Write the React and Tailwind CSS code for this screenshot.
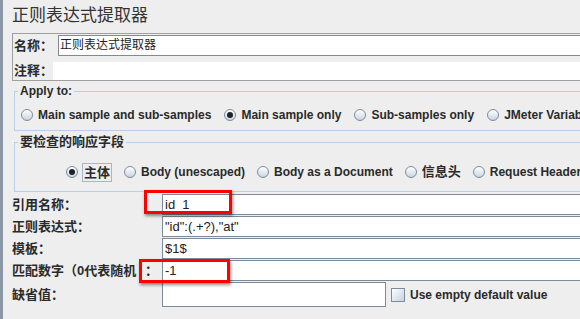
import React from "react";

const Radio = ({ checked }) => (
  <span className="relative inline-block w-[12px] h-[12px] shrink-0 rounded-full border border-[#7d8b99] bg-gradient-to-b from-[#ffffff] to-[#c9d5e2]">
    {checked && (
      <span className="absolute left-[2px] top-[2px] w-[6px] h-[6px] rounded-full bg-[#1e2228]" />
    )}
  </span>
);

const RadioItem = ({ checked, children }) => (
  <div className="flex items-center gap-[5px] shrink-0">
    <Radio checked={checked} />
    <span className="text-[12px] font-bold text-[#2a2a2a] leading-[16px] whitespace-nowrap">
      {children}
    </span>
  </div>
);

const Field = ({ children, className = "" }) => (
  <div
    className={
      "h-[21px] bg-white border border-[#7d8b99] pl-[2px] flex items-center text-[13px] text-[#222] whitespace-nowrap " +
      className
    }
  >
    {children}
  </div>
);

const Row = ({ label, children }) => (
  <div className="flex items-center mb-[1px]">
    <div className="w-[150px] shrink-0 text-[13px] font-bold text-[#2a2a2a] leading-[21px] whitespace-nowrap overflow-hidden">
      {label}
    </div>
    {children}
  </div>
);

export default function App() {
  return (
    <div className="w-[580px] h-[319px] overflow-hidden bg-[#eeeeee] flex font-['Liberation_Sans','Noto_Sans_CJK_SC',sans-serif] text-[#2a2a2a]">
      <div className="w-[3px] shrink-0 bg-[#8c97a5]" />
      <div className="relative shrink-0 w-[640px] pl-[9px] pt-[5px] flex flex-col">
        <div className="h-[22px] text-[17px] leading-[22px] text-[#333]">正则表达式提取器</div>

        <div className="mt-[6px] w-[620px] h-[48px] border border-[#a0a0a0] flex flex-col">
          <div className="flex pt-[1px]">
            <div className="w-[45px] pl-[1px] text-[13px] font-bold leading-[21px]">名称：</div>
            <div className="flex-1 h-[21px] bg-white border border-[#7d8b99] pl-[1px] text-[12px] leading-[19px] text-[#222]">
              正则表达式提取器
            </div>
          </div>
          <div className="flex mt-[6px]">
            <div className="w-[40px] pl-[1px] text-[13px] font-bold leading-[18px]">注释：</div>
            <div className="flex-1 h-[18px] bg-white" />
          </div>
        </div>

        <fieldset className="mt-[3px] ml-[2px] w-[620px] border border-[#b8cfe5] p-0">
          <legend className="ml-[3px] px-[2px] text-[12px] font-bold leading-[14px]">Apply to:</legend>
          <div className="flex items-center gap-[13px] h-[16px] pl-[6px] mt-[9px] mb-[7px]">
            <RadioItem>Main sample and sub-samples</RadioItem>
            <RadioItem checked>Main sample only</RadioItem>
            <RadioItem>Sub-samples only</RadioItem>
            <RadioItem>JMeter Variable Name to use</RadioItem>
          </div>
        </fieldset>

        <fieldset className="mt-[4px] ml-[2px] w-[620px] border border-[#b8cfe5] p-0">
          <legend className="ml-[3px] px-[2px] text-[13px] font-bold leading-[14px]">要检查的响应字段</legend>
          <div className="flex items-center gap-[12px] h-[20px] pl-[51px] mt-[13px] mb-[9px]">
            <div className="flex items-center gap-[4px] shrink-0">
              <Radio checked />
              <span className="border border-[#a3b8cc] px-[1px] leading-[17px] text-[13px] font-bold">主体</span>
            </div>
            <RadioItem>Body (unescaped)</RadioItem>
            <RadioItem>Body as a Document</RadioItem>
            <div className="flex items-center gap-[5px] shrink-0">
              <Radio />
              <span className="text-[13px] font-bold leading-[16px]">信息头</span>
            </div>
            <RadioItem>Request Headers</RadioItem>
          </div>
        </fieldset>

        <div className="mt-[2px] flex flex-col">
          <Row label="引用名称：">
            <Field className="w-[460px]">id_1</Field>
          </Row>
          <Row label="正则表达式：">
            <Field className="w-[460px]">"id":(.+?),"at"</Field>
          </Row>
          <Row label="模板：">
            <Field className="w-[460px]">$1$</Field>
          </Row>
          <Row
            label={
              <span className="flex">
                <span className="inline-block w-[125px] overflow-hidden whitespace-nowrap">匹配数字（0代表随机）</span>
                <span className="ml-[8px]">：</span>
              </span>
            }
          >
            <Field className="w-[460px]">-1</Field>
          </Row>
          <div className="flex items-center">
            <div className="w-[150px] shrink-0 text-[13px] font-bold leading-[24px]">缺省值：</div>
            <div className="w-[224px] h-[25px] bg-white border border-[#7d8b99]" />
            <div className="ml-[5px] flex items-center gap-[5px]">
              <span className="w-[14px] h-[14px] border border-[#7d8b99] bg-gradient-to-br from-[#ffffff] to-[#c4d2e1]" />
              <span className="text-[12px] font-bold leading-[16px]">Use empty default value</span>
            </div>
          </div>
        </div>

        <div className="absolute left-[141px] top-[190px] w-[88px] h-[24px] border-[3px] border-[#ff0000] shadow-[1px_2px_3px_rgba(0,0,0,0.45)]" />
        <div className="absolute left-[136px] top-[259px] w-[91px] h-[24px] border-[3px] border-[#ff0000] shadow-[1px_2px_3px_rgba(0,0,0,0.45)]" />
      </div>
    </div>
  );
}
